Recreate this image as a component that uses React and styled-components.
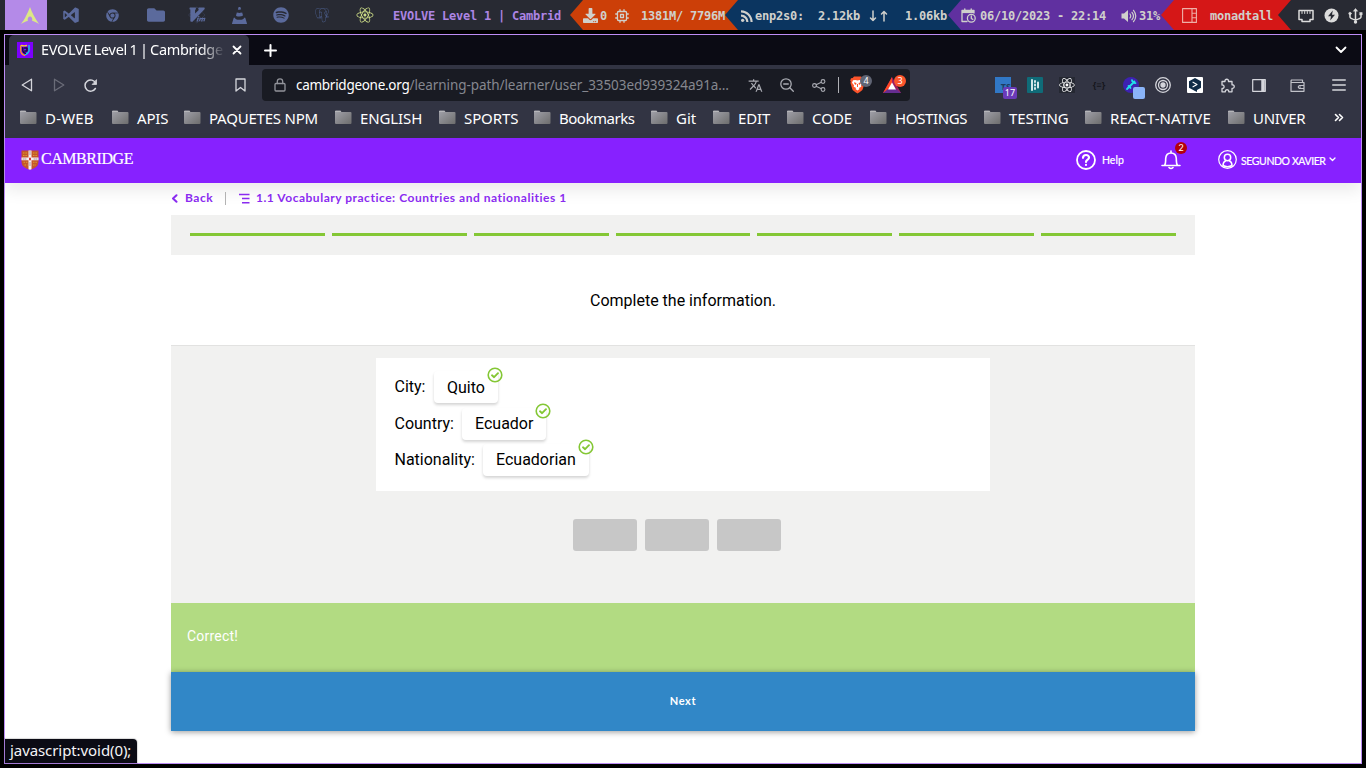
import React from 'react';
import styled, { createGlobalStyle } from 'styled-components';
import { DiVisualstudio, DiPostgresql, DiReact, DiVim } from 'react-icons/di';
import { FaChrome, FaFolder, FaSpotify, FaDownload } from 'react-icons/fa';
import { SiVlcmediaplayer } from 'react-icons/si';
import { MdTranslate, MdRssFeed } from 'react-icons/md';

const GlobalStyle = createGlobalStyle`
  * { box-sizing: border-box; }
  body { margin: 0; background: #000; overflow: hidden; }
  svg { display: block; flex: none; }
`;

const ui = '"Noto Sans", sans-serif';
const brand = 'Lato, sans-serif';
const copy = 'Roboto, sans-serif';

const Desktop = styled.div`
  width: 1366px;
  height: 768px;
  background: #000;
  display: flex;
  flex-direction: column;
`;

/* ---------- system bar ---------- */
const SystemBar = styled.div`
  height: 30px;
  background: #282a33;
  display: flex;
  align-items: stretch;
  padding-left: 5px;
  font: bold 12px/30px "DejaVu Sans Mono", monospace;
  letter-spacing: -0.224px;
  white-space: pre;
`;
const Workspace = styled.div`
  width: 42px;
  display: flex;
  align-items: center;
  justify-content: center;
  padding-left: ${(p) => p.$pl || 6}px;
  background: ${(p) => (p.$active ? '#b48ae8' : 'transparent')};
  color: ${(p) => p.$color || '#5b6a9c'};
`;
const WindowTitle = styled.div`
  width: 200px;
  padding-left: 10px;
  padding-top: 1px;
  color: #ad85e4;
`;
const Segment = styled.div`
  position: relative;
  width: ${(p) => p.$w}px;
  background: ${(p) => p.$bg};
  color: #d0d0cc;
  display: flex;
  align-items: center;
  padding-top: 1px;
  &::before {
    content: '';
    position: absolute;
    left: -13px;
    top: 0;
    border-style: solid;
    border-width: 15px 13px 15px 0;
    border-color: transparent ${(p) => p.$bg} transparent transparent;
  }
`;
const Cell = styled.span`
  display: flex;
  align-items: center;
  flex: none;
  width: ${(p) => p.$w}px;
`;

/* ---------- browser ---------- */
const Browser = styled.div`
  margin: 4px 0 0 4px;
  width: 1358px;
  height: 730px;
  border: 1px solid #bd8cf5;
  background: #fff;
  display: flex;
  flex-direction: column;
  font-family: ${ui};
  position: relative;
`;
const TabStrip = styled.div`
  height: 30px;
  background: #0b0b14;
  display: flex;
  align-items: center;
  padding-left: 4px;
  color: #fff;
`;
const Tab = styled.div`
  width: 240px;
  height: 30px;
  background: #323443;
  border-radius: 5px 5px 0 0;
  display: flex;
  align-items: center;
  padding-left: 8px;
`;
const TabTitle = styled.div`
  width: 184px;
  margin: 0 7px 0 8px;
  font-size: 14.5px;
  letter-spacing: -0.3px;
  word-spacing: -1px;
  line-height: 28px;
  height: 30px;
  overflow: hidden;
  white-space: nowrap;
  mask-image: linear-gradient(to right, #000 160px, transparent 184px);
`;
const NewTab = styled.div`
  margin-left: 15px;
  flex: 1;
`;
const TabMenu = styled.div`
  margin-right: 14px;
`;
const Toolbar = styled.div`
  height: 40px;
  background: #323443;
  display: flex;
  align-items: center;
  color: #d5d6dc;
`;
const AddressBar = styled.div`
  width: 648px;
  height: 32px;
  border-radius: 4px;
  background: #191b23;
  display: flex;
  align-items: center;
  padding-left: 12px;
`;
const Url = styled.div`
  width: 452px;
  padding: 0 0 0 10px;
  line-height: 18px;
  font-size: 13.5px;
  letter-spacing: -0.08px;
  color: #85878f;
  white-space: nowrap;
  b { font-weight: 400; color: #fff; letter-spacing: -0.28px; }
`;
const Divider = styled.div`
  width: 1px;
  height: ${(p) => p.$h}px;
  background: ${(p) => p.$c};
`;
const Slot = styled.div`
  position: relative;
  width: ${(p) => p.$w}px;
  padding-left: ${(p) => p.$pl || 0}px;
  display: flex;
  justify-content: center;
  align-items: center;
  flex: none;
`;
const Badge = styled.span`
  position: absolute;
  left: ${(p) => p.$x}px;
  top: ${(p) => p.$y}px;
  width: ${(p) => p.$w}px;
  height: 12px;
  border-radius: ${(p) => (p.$round ? 6 : 2)}px;
  background: ${(p) => p.$bg};
  color: #fff;
  font-size: 9px;
  line-height: 12px;
  text-align: center;
`;
const TsTile = styled.div`
  width: 16px;
  height: 16px;
  background: #3178c6;
  color: #1d3c60;
  font: bold 9px/20px ${ui};
  text-align: right;
`;
const ReactTile = styled.div`
  width: 16px;
  height: 16px;
  background: #252832;
  color: #fff;
  display: flex;
  align-items: center;
  justify-content: center;
`;
const Braces = styled.div`
  color: #15161c;
  font: bold 9px/16px ${ui};
`;
const Bookmarks = styled.div`
  height: 33px;
  background: #323443;
  display: flex;
  align-items: center;
  padding: 0 0 8px 14px;
  color: #fff;
  font-size: 15px;
  white-space: nowrap;
`;
const Bookmark = styled.div`
  width: ${(p) => p.$w}px;
  letter-spacing: ${(p) => p.$ls || 0}px;
  display: flex;
  align-items: center;
  gap: 8px;
  flex: none;
`;
const StatusBubble = styled.div`
  position: absolute;
  left: 0;
  bottom: 0;
  width: 132px;
  height: 24px;
  border-radius: 0 4px 0 0;
  background: #0b0b14;
  color: #f4f4f6;
  font-size: 15px;
  letter-spacing: -0.08px;
  line-height: 23px;
  padding-left: 5px;
  white-space: nowrap;
  box-shadow: 0 0 1px 1px rgba(0, 0, 0, 0.15);
`;

/* ---------- site ---------- */
const SiteHeader = styled.header`
  height: 45px;
  flex: none;
  background: #8721ff;
  display: flex;
  align-items: center;
  padding: 0 25px 2px 16px;
  color: #fff;
  box-shadow: 0 8px 16px rgba(0, 0, 0, 0.08);
  font-family: ${brand};
`;
const Wordmark = styled.div`
  flex: 1;
  padding: 0 0 1px 2px;
  font: 16px/20px "Liberation Serif", serif;
  letter-spacing: -0.45px;
  -webkit-text-stroke: 0.2px #fff;
`;
const HelpLabel = styled.div`
  width: 65px;
  padding: 1px 0 0 6px;
  font-size: 10.5px;
  -webkit-text-stroke: 0.2px #fff;
`;
const UserName = styled.div`
  width: 92px;
  padding: 2px 0 0 4px;
  font-size: 10.5px;
  letter-spacing: -0.4px;
  white-space: nowrap;
  -webkit-text-stroke: 0.2px #fff;
`;
const Lesson = styled.main`
  width: 1024px;
  margin: 0 auto;
  position: relative;
  font-family: ${copy};
  color: #000;
`;
const Crumbs = styled.nav`
  height: 32px;
  display: flex;
  align-items: center;
  color: #8a2bf0;
  font: bold 12px/14px ${brand};
  letter-spacing: 0.52px;
  padding-bottom: 2px;
  white-space: nowrap;
`;
const BackLink = styled.a`
  display: flex;
  align-items: center;
  gap: 6px;
  width: 54px;
`;
const CrumbTitle = styled.span`
  padding-left: 6px;
`;
const Progress = styled.div`
  height: 40px;
  padding: 18px 19px 0;
  background: #f1f1f0;
  display: grid;
  grid-template-columns: repeat(7, 1fr);
  column-gap: 7px;
`;
const Step = styled.div`
  height: 3px;
  background: #84c735;
`;
const Instruction = styled.div`
  height: 91px;
  border-bottom: 1px solid #e2e2e1;
  font-size: 16px;
  line-height: 91px;
  text-align: center;
`;
const Activity = styled.div`
  height: 257px;
  background: #f1f1f0;
  padding-top: 12px;
`;
const Card = styled.div`
  width: 614px;
  height: 133px;
  margin: 0 auto;
  background: #fff;
  padding: 13px 0 0 18.5px;
`;
const Chip = styled.span`
  position: relative;
  width: ${(p) => p.$w}px;
  height: 32px;
  padding-left: 13px;
  border-radius: 4px;
  box-shadow: 0 2px 3px rgba(0, 0, 0, 0.17);
  svg { position: absolute; right: -4.5px; top: -4.5px; }
`;
const Answer = styled.div`
  height: ${(p) => p.$h}px;
  display: flex;
  align-items: flex-start;
  font-size: 16px;
  line-height: 32px;
  &:first-child ${Chip} { line-height: 33px; }
`;
const Label = styled.span`
  width: ${(p) => p.$w}px;
`;
const Bank = styled.div`
  display: flex;
  gap: 8px;
  padding: 28px 0 0 402px;
`;
const EmptyTile = styled.div`
  width: 64px;
  height: 32px;
  border-radius: 3px;
  background: #c7c7c7;
`;
const Feedback = styled.div`
  height: 69px;
  background: #b2db82;
  color: #fff;
  font-size: 14px;
  line-height: 66px;
  letter-spacing: 0.2px;
  padding-left: 16px;
`;
const NextButton = styled.div`
  height: 59px;
  background: #3187c7;
  color: #fff;
  font: bold 11px/58px ${brand};
  letter-spacing: 0.7px;
  text-align: center;
  box-shadow: 0 1px 6px rgba(0, 0, 0, 0.4);
`;

/* ---------- drawings ---------- */
const Svg = ({ w = 16, h = w, vb, sw = 1.3, children, ...rest }) => (
  <svg width={w} height={h} viewBox={vb || `0 0 ${w} ${h}`} fill="none" stroke="currentColor"
    strokeWidth={sw} strokeLinecap="round" strokeLinejoin="round" {...rest}>{children}</svg>
);

const Arch = () => (
  <Svg w={18} h={17} stroke="none">
    <path fill="#dce886" d="M9 0 C8 3 6.500 6 5 9 C3.500 12 2 14.500 0 17 C3 15.200 5 14.300 6.800 14 C6.200 11 7.500 9.500 9 9.500 C10.500 9.500 11.800 11 11.200 14 C13 14.300 15 15.200 18 17 C14 11.500 11 5.500 9 0Z" />
  </Svg>
);
const Chipset = () => (
  <Svg w={14} sw={1.3}>
    <rect x="2.500" y="2.500" width="9" height="9" rx="1" />
    <rect x="5.500" y="5.500" width="3" height="3" />
    <path d="M5 .7v1.500M9 .7v1.500M5 11.800v1.500M9 11.800v1.500M.7 5h1.500M.7 9h1.500M11.800 5h1.500M11.800 9h1.500" />
  </Svg>
);
const CalendarClock = () => (
  <Svg w={15} sw={1.3}>
    <path d="M13 5V2.500H1V13.500H6" />
    <path d="M1 4H13" strokeWidth="2.200" strokeLinecap="butt" />
    <path d="M3.800 .8v2M10.200 .8v2" />
    <circle cx="10.300" cy="10.300" r="3.900" />
    <path d="M10.300 8v2.500l1.500 .9" />
  </Svg>
);
const Speaker = () => (
  <Svg w={16} h={14} sw={1.2}>
    <path d="M.5 4.500H3L7 1v12L3 9.500H.5Z" fill="currentColor" stroke="none" />
    <path d="M9 5q1.500 2 0 4M11 3.300q3 3.700 0 7.400M12.500 1.300q4.500 5.700 0 11.400" />
  </Svg>
);
const TileLayout = () => (
  <Svg w={15} stroke="#efb0a8" sw={1.1}>
    <path d="M.6.6h13.800v13.800H.6ZM10 .6v13.800M10 5.200h4.500M10 9.800h4.500" />
  </Svg>
);
const Ethernet = () => (
  <Svg w={16} h={14} stroke="#dcdcdc" sw={1.5}>
    <path d="M1 1.500h14v9h-3v2H4v-2H1Z" />
    <path d="M4 2.500v2M6.700 2.500v2M9.300 2.500v2M12 2.500v2" strokeWidth="1" />
  </Svg>
);
const Power = () => (
  <Svg w={15} stroke="none"><circle cx="7.500" cy="7.500" r="7" fill="#dcdcdc" /><path d="M8.800 2.500 4 8.300h3l-.8 4.200L11 6.700H8Z" fill="#282a33" /></Svg>
);
const Usb = () => (
  <Svg w={15} h={16} stroke="#dcdcdc" sw={1.5}>
    <path d="M7.500 2v11M2 6v3q0 1.500 5.500 3M13 6v3q0 1.500-5.500 3" />
    <path d="M5.500 3 7.500 .5 9.500 3ZM11.800 4.500h2.400v2.400h-2.400Z" fill="#dcdcdc" strokeWidth=".5" />
    <circle cx="2" cy="5.500" r="1.300" fill="#dcdcdc" strokeWidth=".5" /><circle cx="7.500" cy="14" r="1.700" fill="#dcdcdc" stroke="none" />
  </Svg>
);
const Favicon = () => (
  <Svg w={16}>
    <rect width="16" height="16" fill="#7d00ff" stroke="none" />
    <path d="M3.700 4v4.500q0 3.500 4 5" stroke="#ff9c1a" strokeWidth="1.300" />
    <path d="M4.500 3.500q3 .8 5 0" stroke="#f4d02c" strokeWidth="1.400" />
    <path d="M12 3.500v5.500q-1 2.500-3.500 3.500" stroke="#17c6e0" strokeWidth="1.500" />
    <path d="M5.800 5.800v3q.5 2 2.500 2.500M7.500 6h2.500v3H7.800" stroke="#151338" strokeWidth="1.500" />
  </Svg>
);
const FolderIcon = () => (
  <Svg w={18} h={15} stroke="none">
    <defs><linearGradient id="folder" x1="0" y1="0" x2="1" y2="1"><stop offset="0" stopColor="#a2a2ab" /><stop offset="1" stopColor="#6d6d6d" /></linearGradient></defs>
    <path d="M1 1.500q0-1 1-1h4.500l1 1.500h9q1 0 1 1V13q0 1-1 1H2q-1 0-1-1Z" fill="url(#folder)" />
    <path d="M1.500 1.500h5" stroke="#b5b5b9" strokeWidth="1" />
  </Svg>
);
const BraveLion = () => (
  <Svg w={15} h={18} stroke="none">
    <path d="M4 .5h7l1.300 1.500 1.700.2.800 2.300-.6 1 .4 1.500-2 6.500q-.4 1-5.100 4Q2.800 14.500 2.400 13.500L.4 7l.4-1.500-.6-1L1 2.200 2.700 2Z" fill="#fb542b" />
    <path d="M3 4.200 5.500 4l2 .5 2-.5 2.500.2 1 2.500-2 2.600.3 1.400L8.800 12 9.500 13l-2 1.500-2-1.500.7-1-2.500-1.300L4 9.300 2 6.700Z" fill="#fff" />
    <path d="M4 6.200 6.500 7 6 9 4.500 8ZM11 6.200 8.500 7 9 9l1.500-1ZM7 8h1v3H7Z" fill="#fb542b" />
  </Svg>
);
const Crest = () => (
  <Svg w={18} h={20} stroke="none">
    <path d="M.5.500h17V12q0 5.500-8.500 7.700Q.5 17.500.5 12Z" fill="#c4562b" />
    <path d="M7.500.5h3v7h7v2.800h-7v9L9 19.700l-1.500-.4v-9H.5V7.500h7Z" fill="#f7eef2" />
    <path d="M2 3h4.500M2 5.500h4.500M12 3h4.500M12 5.500h4.500M2.500 12.300h4M3.500 15h3M12 12.300h4M12 15h3" stroke="#dba02f" strokeWidth="1.100" strokeDasharray="1.500 .9" strokeLinecap="butt" />
    <path d="M8 7.700h2v2.500H8Z" fill="#d33a3a" />
    <path d="M9 1.500v4M9 12.500v4M2 9h3M13 9h3" stroke="#8f7b87" strokeWidth=".8" strokeDasharray="1 1" />
  </Svg>
);
const Check = () => (
  <Svg w={16} stroke="#84c735" sw={1.6}>
    <circle cx="8" cy="8" r="6.800" /><path d="M5 8.300 7.100 10.200 11 6.200" strokeWidth="1.900" />
  </Svg>
);

const bookmarks = [
  ['D-WEB', 92, 0.2], ['APIS', 72, -0.2], ['PAQUETES NPM', 151, -0.22], ['ENGLISH', 104, -0.1], ['SPORTS', 95, -0.1], ['Bookmarks', 117, -0.48],
  ['Git', 62], ['EDIT', 74, -0.15], ['CODE', 83], ['HOSTINGS', 114, -0.35], ['TESTING', 101, -0.15], ['REACT-NATIVE', 143, 0.1], ['UNIVER', 107, -0.3],
];
const answers = [
  { label: 'City:', labelWidth: 39.5, value: 'Quito', width: 64, height: 36.5 },
  { label: 'Country:', labelWidth: 67.5, value: 'Ecuador', width: 84, height: 36.3 },
  { label: 'Nationality:', labelWidth: 88.5, value: 'Ecuadorian', width: 106, height: 36 },
];

export default function App() {
  return (
    <Desktop>
      <GlobalStyle />
      <SystemBar>
        <Workspace $active $pl={8}><Arch /></Workspace>
        <Workspace $pl={6}><DiVisualstudio size={22} /></Workspace>
        <Workspace $pl={4}><FaChrome size={13} /></Workspace>
        <Workspace $pl={8}><FaFolder size={18} /></Workspace>
        <Workspace $pl={6}><DiVim size={22} /></Workspace>
        <Workspace $pl={6}><SiVlcmediaplayer size={17} /></Workspace>
        <Workspace $pl={6}><FaSpotify size={16} /></Workspace>
        <Workspace $pl={4} $color="#4f6394"><DiPostgresql size={20} /></Workspace>
        <Workspace $pl={6} $color="#cbdb86"><DiReact size={22} /></Workspace>
        <WindowTitle>EVOLVE Level 1 | Cambrid</WindowTitle>
        <Segment $w={155} $bg="#cc3f08">
          <Cell $w={17}><FaDownload size={15} /></Cell>
          <Cell $w={15}>0</Cell>
          <Cell $w={26}><Chipset /></Cell>
          <Cell $w={84}>1381M/ 7796M</Cell>
        </Segment>
        <Segment $w={223} $bg="#0b3560">
          <Cell $w={17}><MdRssFeed size={18} /></Cell>
          <Cell $w={63}>enp2s0:</Cell>
          <Cell $w={50}>2.12kb</Cell>
          <Cell $w={37}>
            <Svg w={20} h={12} sw={1.5}><path d="M5 1v9.500M2.500 8 5 10.500 7.500 8M16 11V1.500M13.500 4 16 1.500 18.500 4" /></Svg>
          </Cell>
          <Cell $w={42}>1.06kb</Cell>
        </Segment>
        <Segment $w={213} $bg="#6030a0">
          <Cell $w={19}><CalendarClock /></Cell>
          <Cell $w={141}>06/10/2023 - 22:14</Cell>
          <Cell $w={18}><Speaker /></Cell>
          <Cell $w={21}>31%</Cell>
        </Segment>
        <Segment $w={117} $bg="#d51717">
          <Cell $w={8} />
          <Cell $w={28}><TileLayout /></Cell>
          <Cell $w={63}>monadtall</Cell>
        </Segment>
        <Segment $w={75} $bg="#282a33">
          <Cell $w={7} />
          <Cell $w={26}><Ethernet /></Cell>
          <Cell $w={24}><Power /></Cell>
          <Cell $w={15}><Usb /></Cell>
        </Segment>
      </SystemBar>

      <Browser>
        <TabStrip>
          <Tab>
            <Favicon />
            <TabTitle>EVOLVE Level 1 | Cambridge</TabTitle>
            <Svg w={10} sw={1.8}><path d="M1.500 1.500l7 7M8.500 1.500l-7 7" /></Svg>
          </Tab>
          <NewTab><Svg w={13} sw={2}><path d="M6.500 1v11M1 6.500h11" /></Svg></NewTab>
          <TabMenu><Svg w={12} h={8} sw={1.8}><path d="M1.500 1.500 6 6 10.500 1.500" /></Svg></TabMenu>
        </TabStrip>
        <Toolbar>
          <Slot $w={44}><Svg w={12} h={14}><path d="M10.500 1.200v11.600L1.200 7Z" /></Svg></Slot>
          <Slot $w={20}><Svg w={12} h={14} stroke="#6a6c78"><path d="M1.500 1.200v11.600L10.800 7Z" /></Svg></Slot>
          <Slot $w={43}><Svg w={15} sw={1.5}><path d="M12.400 10.500A5.600 5.600 0 1 1 12.700 5.200" /><path d="M13.500 2v4.500H9.500Z" fill="currentColor" strokeWidth=".8" /></Svg></Slot>
          <Slot $w={150} $pl={106}><Svg w={11} h={14}><path d="M1 1h9v12L5.500 9.500 1 13Z" /></Svg></Slot>
          <AddressBar>
            <Svg w={12} h={14} stroke="#92949b"><rect x="1" y="5.500" width="10" height="7.500" rx="1" /><path d="M3.300 5.500V3.500a2.700 2.700 0 0 1 5.400 0v2" /></Svg>
            <Url><b>cambridgeone.org</b>/learning-path/learner/user_33503ed939324a91a…</Url>
            <Slot $w={34}><MdTranslate size={15} color="#a9abb2" /></Slot>
            <Slot $w={30}><Svg w={14} stroke="#a9abb2"><circle cx="6" cy="6" r="5.200" /><path d="M3.700 6h4.600M9.800 9.800 13.300 13.300" /></Svg></Slot>
            <Slot $w={34}><Svg w={14} h={13} stroke="#a9abb2" sw={1.1}><circle cx="2.500" cy="6.500" r="1.900" /><circle cx="11" cy="2.500" r="1.900" /><circle cx="11" cy="10.500" r="1.900" /><path d="M4.200 5.700 9.300 3.300M4.200 7.300 9.300 9.700" /></Svg></Slot>
            <Slot $w={4}><Divider $h={16} $c="#b0b1b6" /></Slot>
            <Slot $w={35}><BraveLion /><Badge $round $x={20} $y={-1} $w={12} $bg="#606574">4</Badge></Slot>
            <Slot $w={34}>
              <Svg w={18} h={16} stroke="none"><path d="M9 0 18 16H0Z" fill="#9e1f63" /><path d="M9 0 0 16 9 11Z" fill="#ff4724" /><path d="M0 16h18l-5-4H5Z" fill="#662d91" /><path d="M9 5.500 13 12.500H5Z" fill="#fff" /></Svg>
              <Badge $round $x={19} $y={-2} $w={12} $bg="#fb542b">3</Badge>
            </Slot>
          </AddressBar>
          <Slot $w={77} />
          <Slot $w={32}>
            <TsTile>TS</TsTile><Badge $x={16} $y={10} $w={14} $bg="#6a3ab8">17</Badge>
          </Slot>
          <Slot $w={32}><Svg w={16} sw={1.8}><rect width="16" height="16" rx="1" fill="#0f6b78" stroke="none" /><path d="M5 3v10M8 4v1M8 7.500v1M8 11v1M11 5.500v5" stroke="#e8f6f6" /></Svg></Slot>
          <Slot $w={32}><ReactTile><DiReact size={20} /></ReactTile></Slot>
          <Slot $w={32}><Braces>{'{≡}'}</Braces></Slot>
          <Slot $w={32}>
            <Svg w={16} sw={1.8}><circle cx="8" cy="8" r="8" fill="#3d22b0" stroke="none" /><path d="M4 12 11.500 4.500M9 3.200q.5 2.500 3.500 3M5.500 9q1.500 0 2 2" stroke="#21e0e8" /></Svg>
            <Badge $x={18} $y={10} $w={12} $bg="#8ab4f8" />
          </Slot>
          <Slot $w={32}><Svg w={16}><circle cx="8" cy="8" r="7.300" /><circle cx="8" cy="8" r="4.500" /><circle cx="8" cy="8" r="2" fill="currentColor" /></Svg></Slot>
          <Slot $w={32}><Svg w={16}><rect width="16" height="16" rx="1" fill="#fff" stroke="none" /><path d="M8 1 14 4.200v6.600L10 13v2L8 14 2 10.800V4.200Z" fill="#0f2b46" stroke="none" /><path d="M6 5.200 10 7.500 6 9.800" stroke="#fff" strokeWidth="1.100" /></Svg></Slot>
          <Slot $w={32}><Svg w={15}><path d="M2 3.500h3c-.5-3 4-3 3.500 0H12v3.300c3-.5 3 4 0 3.500v3.500H8.800c.3-2.800-3.800-2.800-3.500 0H2v-3.300c2.800.3 2.800-3.900 0-3.500Z" /></Svg></Slot>
          <Slot $w={32}><Svg w={14} h={13} sw={1.2}><rect x=".7" y=".7" width="12.600" height="11.600" /><path d="M11 1v11" strokeWidth="3.500" strokeLinecap="butt" /></Svg></Slot>
          <Slot $w={44}><Svg w={15} h={13} sw={1.2} stroke="#c1c2c9"><path d="M12.500 3.500V1H1.500q-1 1.200 0 2.500H14v8.800H1V2M14 6.500H9.500q-2.500 1.500 0 3H14M10 8h.5" /></Svg></Slot>
          <Slot $w={40}><Svg w={14} h={12}><path d="M.7 1h12.600M.7 6h12.600M.7 11h12.600" /></Svg></Slot>
        </Toolbar>
        <Bookmarks>
          {bookmarks.map(([name, w, ls]) => <Bookmark key={name} $w={w} $ls={ls}><FolderIcon />{name}</Bookmark>)}
          <Svg w={10} h={9} sw={1.6}><path d="M1.500 1.500 4.500 4.500 1.500 7.500M5.500 1.500 8.500 4.500 5.500 7.500" /></Svg>
        </Bookmarks>

        <SiteHeader>
          <Crest />
          <Wordmark>CAMBRIDGE</Wordmark>
          <Svg w={20} sw={1.8}><circle cx="10" cy="10" r="9" /><path d="M7 7.800c.2-3.800 6.200-3.600 6 0C12.900 9.600 10 9.700 10 12M10 14.800v.1" strokeWidth="2.200" /></Svg>
          <HelpLabel>Help</HelpLabel>
          <Slot $w={20}>
            <Svg w={20} sw={1.6}><path d="M1 15.500h18M3.500 15.500c1.500-2 1-3.500 1.200-7 .2-3.500 2.500-5.500 5.300-5.500s5.100 2 5.300 5.500c.2 3.500-.3 5 1.200 7M10 3V1M8 17.500q2 2 4 0" /></Svg>
            <Badge $round $x={14} $y={-8} $w={12} $bg="#b50009">2</Badge>
          </Slot>
          <Slot $w={37} />
          <Svg w={19} sw={1.2}><circle cx="9.500" cy="9.500" r="8.800" /><circle cx="9.500" cy="7.500" r="3.200" strokeWidth="1.500" /><path d="M5 15.500q0-3.500 2.700-4.800M14 15.500q0-3.500-2.700-4.800M5 15.500q4.500 2.500 9 0" strokeWidth="1.500" /></Svg>
          <UserName>SEGUNDO XAVIER</UserName>
          <Svg w={7} h={5}><path d="M1 1 3.500 3.500 6 1" /></Svg>
        </SiteHeader>

        <Lesson>
          <Crumbs>
            <BackLink><Svg w={8} h={9} sw={2}><path d="M5.500 1.200 2 4.500 5.500 7.800" /></Svg>Back</BackLink>
            <Divider $h={13} $c="#b3b3b3" />
            <Slot $w={13} />
            <Svg w={11} h={11} sw={1.6} strokeLinecap="butt"><path d="M0 1.500h10.500M3 5.500h7.500M3 9.700h7.500" /></Svg>
            <CrumbTitle>1.1 Vocabulary practice: Countries and nationalities 1</CrumbTitle>
          </Crumbs>
          <Progress>{Array.from({ length: 7 }, (_, i) => <Step key={i} />)}</Progress>
          <Instruction>Complete the information.</Instruction>
          <Activity>
            <Card>
              {answers.map((a) => (
                <Answer key={a.label} $h={a.height}>
                  <Label $w={a.labelWidth}>{a.label}</Label>
                  <Chip $w={a.width}>{a.value}<Check /></Chip>
                </Answer>
              ))}
            </Card>
            <Bank><EmptyTile /><EmptyTile /><EmptyTile /></Bank>
          </Activity>
          <Feedback>Correct!</Feedback>
          <NextButton>Next</NextButton>
        </Lesson>
        <StatusBubble>javascript:void(0);</StatusBubble>
      </Browser>
    </Desktop>
  );
}
